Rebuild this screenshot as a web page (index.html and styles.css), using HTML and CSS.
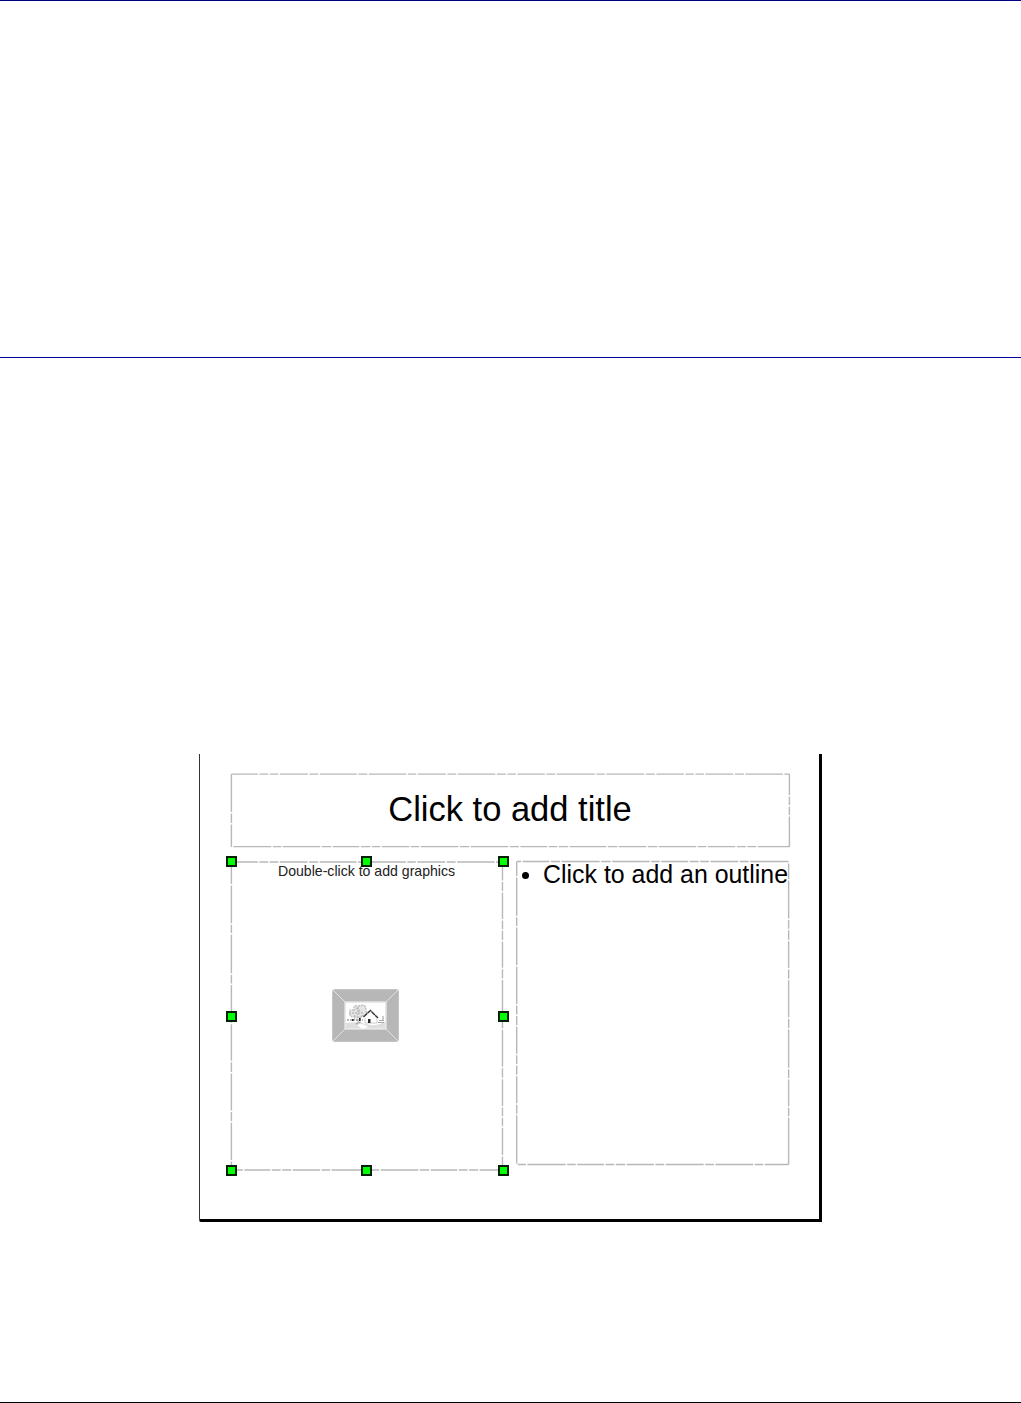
FILE: index.html
```html
<!DOCTYPE html>
<html lang="en">
	<head>
		<meta charset="UTF-8" />
		<meta name="viewport" content="width=device-width, initial-scale=1.0" />
		<title>Slide Layout</title>
		<link rel="stylesheet" href="styles.css">
	</head>
	<body>
		<header class="page-header"></header>
		<main class="page-main">
			<div class="slide">
				<div class="box title-box">
					<svg class="outline" viewBox="0 0 558 73">
						<path d="M0 0H558" stroke-dasharray="26.5 1.5 9 1.5 8.5 1.5 28 1.5 9 1.5 37 1.5 9 1.5 37.5 1.5 8.5 1.5 28 1.5 9 1.5 37.5 1.5 9 1.5 8.5 1.5 27.5 1.5 9 1.5 38 1.5 8.5 1.5 38 1.5 9 1.5 27.5 1.5 8.5 1.5 8.5 1.5 28 1.5 9 1.5 37.5 1.5 20 0" />
						<path d="M2 72.5H558" stroke-dasharray="38 1.5 8.5 1.5 37.5 1.5 9.5 1.5 26.5 1.5 9.5 1.5 8.5 1.5 27.5 1.5 8.5 1.5 37.5 1.5 9.5 1.5 37.5 1.5 9 1.5 27 1.5 8.5 1.5 9.5 1.5 36.5 1.5 9.5 1.5 27.5 1.5 9.5 1.5 37.5 1.5 8.5 1.5 27.5 1.5 9 1.5 9 1.5 40 0" />
						<path d="M0 0V73" stroke-dasharray="38 1.5 9.5 1.5 40 0" />
						<path d="M558 0V73" stroke-dasharray="21 1.5 8.5 1.5 8.5 1.5 40 0" />
					</svg>
					<h1 class="title">Click to add title</h1>
				</div>
				<div class="columns">
					<div class="box graphics-box">
						<svg class="outline" viewBox="0 0 272 309">
							<path d="M0 0H272" stroke-dasharray="26.5 1.5 9 1.5 8.5 1.5 28 1.5 9 1.5 37 1.5 9 1.5 37.5 1.5 8.5 1.5 28 1.5 9 1.5 37.5 1.5 40 0" />
							<path d="M0 309H272" stroke-dasharray="11.5 1.5 26 1.5 9 1.5 9 1.5 27.5 1.5 8.5 1.5 48 1.5 37.5 1.5 9.5 1.5 26.5 1.5 9 1.5 9 1.5 40 0" />
							<path d="M0 0V309" stroke-dasharray="22 1.5 38 1.5 8.3 1.5 38.8 1.5 8.9 1.5 37.8 1.5 36.5 1.5 9.8 1.5 37.2 1.5 9.2 1.5 37.5 1.5 20 0" />
							<path d="M272 0V309" stroke-dasharray="18.5 1.5 9.2 1.5 26.5 1.5 8.8 1.5 9.2 1.5 26.5 1.5 9.2 1.5 48.5 1.5 37.1 1.5 9.5 1.5 26.9 1.5 8.8 1.5 8.5 1.5 27.2 1.5 20 0" />
						</svg>
						<p class="hint">Double-click to add graphics</p>
						<svg class="picture" viewBox="0 0 67 53">
							<rect x=".5" y=".5" width="66" height="52" rx="2" fill="#b7b7b7" stroke="#c4c4c4" />
							<path d="M1 1L13 13M66 1L54 13M1 52L13 40M66 52L54 40" stroke="#e2e2e2" />
							<rect x="13" y="13" width="41" height="27" fill="#fff" stroke="#e2e2e2" stroke-width="1.5" />
							<path d="M14 34Q24 32 34 35T53 33V39H14Z" fill="#dedede" />
							<path d="M25 36Q30 33 36 38L30 40Z" fill="#fff" />
							<path d="M18 25Q16 20 22 21Q21 15 27 17Q34 14 34 21Q36 26 30 27Q27 31 23 27Q18 29 18 25Z" fill="#e4e4e4" />
							<g fill="none" stroke="#bcbcbc" stroke-width="1.4" stroke-dasharray="2 1">
								<path d="M18 25Q16 20 22 21Q21 15 27 17Q34 14 34 21Q36 26 30 27Q27 31 23 27Q18 29 18 25Z" />
								<path d="M20 24H31M24 19L29 23M26 18V34M22 28L26 33L30 27" />
								<path d="M15 31H31M24 35L29 33" stroke="#a0a0a0" />
							</g>
							<path d="M31.5 28L38.5 21.5L46 29" fill="none" stroke="#333" stroke-width="1.4" stroke-dasharray="5 .4" />
							<path d="M33 29V34H45V29" fill="none" stroke="#ccc" />
							<path d="M36 30H38.5V34H36ZM27 29H28.5V32H27ZM20 30H21.5V32H20Z" fill="#292929" />
							<path d="M46 33.5H52M47 31.5H52M51 27V32" stroke="#aaa" stroke-width="1.2" />
						</svg>
						<span class="handle top left"></span>
						<span class="handle top center"></span>
						<span class="handle top right"></span>
						<span class="handle middle left"></span>
						<span class="handle middle right"></span>
						<span class="handle bottom left"></span>
						<span class="handle bottom center"></span>
						<span class="handle bottom right"></span>
					</div>
					<div class="box outline-box">
						<svg class="outline" viewBox="0 0 272 303">
							<path d="M0 0H272" stroke-dasharray="4.5 1.5 26.8 1.5 9 1.5 38.2 1.5 9.5 1.5 37.5 1.5 8.5 1.5 27.1 1.5 8.9 1.5 8.8 1.5 27.8 1.5 8.9 1.5 50 0" />
							<path d="M1 303H272" stroke-dasharray="8.3 1.5 38.2 1.5 8.5 1.5 26.8 1.5 8.8 1.5 9.5 1.5 27.2 1.5 8.8 1.5 37.9 1.5 8.8 1.5 37.8 1.5 8.5 1.5 50 0" />
							<path d="M0 0V302" stroke-dasharray="14.5 1.5 38.2 1.5 8.8 1.5 37.5 1.5 37.5 1.5 8.9 1.5 9.1 1.5 27.2 1.5 8.8 1.5 9.2 1.5 27.2 1.5 8.8 1.5 60 0" />
							<path d="M272 2V303" stroke-dasharray="15.5 1.5 37.9 1.5 8.8 1.5 9.5 1.5 26.8 1.5 9.2 1.5 37.2 1.5 9.1 1.5 38.2 1.5 8.8 1.5 26.9 1.5 8.5 1.5 60 0" />
						</svg>
						<ul class="bullets">
							<li>Click to add an outline</li>
						</ul>
					</div>
				</div>
			</div>
		</main>
	</body>
</html>
```
FILE: styles.css
```css
* {
	box-sizing: border-box;
}
body {
	margin: 0;
	height: 1403px;
	display: flex;
	flex-direction: column;
	font-family: 'Liberation Sans', Arial, sans-serif;
	background: #fff;
	color: #000;
	border-top: 1px solid #000080;
	border-bottom: 1px solid #000;
}
.page-header {
	height: 357px;
	border-bottom: 1px solid #000099;
}
.page-main {
	flex: 1;
	padding: 396px 199px 0;
}
.slide {
	width: 623px;
	height: 468px;
	padding: 20px 31px 0;
	border-left: 1px solid #333;
	border-right: 3px solid #000;
	border-bottom: 3px solid #000;
	border-bottom-left-radius: 2px;
}
.box {
	position: relative;
}
.outline {
	position: absolute;
	left: 0;
	top: 0;
	width: 100%;
	height: 100%;
	overflow: visible;
	transform: translate(0.4px, 0.1px);
	fill: none;
	stroke: #b8b8b8;
	stroke-width: 1.4;
}
.title-box {
	width: 558px;
	height: 73px;
	display: flex;
	justify-content: center;
	padding-top: 15px;
}
.title {
	margin: 0;
	font-size: 34.5px;
	font-weight: 400;
	line-height: 40px;
}
.columns {
	display: flex;
	gap: 14px;
	margin-top: 14px;
}
.graphics-box {
	width: 272px;
	height: 309px;
}
.graphics-box .outline {
	transform: translate(0.4px, 0.5px);
}
.hint {
	margin: 0;
	padding-top: 2px;
	font-size: 14.1px;
	line-height: 16px;
	text-align: center;
	white-space: nowrap;
	color: #222;
}
.picture {
	display: block;
	width: 67px;
	height: 53px;
	margin: 110px 0 0 101px;
}
.handle {
	position: absolute;
	width: 11px;
	height: 11px;
	background: #00ff00;
	border: 2px solid #062006;
	margin: -5px 0 0 -5px;
}
.top {
	top: 0;
}
.middle {
	top: 155px;
}
.bottom {
	top: 309px;
}
.left {
	left: 0;
}
.center {
	left: 135px;
}
.right {
	left: 272px;
}
.outline-box {
	width: 272px;
	height: 303px;
}
.outline-box .outline {
	transform: translate(0.7px, 0.5px);
}
.bullets {
	margin: 0;
	padding: 0;
	list-style: none;
}
.bullets li {
	display: flex;
	align-items: center;
	gap: 14px;
	padding-left: 6px;
	font-size: 24.9px;
	line-height: 27px;
	white-space: nowrap;
}
.bullets li::before {
	content: '';
	width: 7px;
	height: 7px;
	margin-top: 2px;
	border-radius: 50%;
	background: #000;
}
```
